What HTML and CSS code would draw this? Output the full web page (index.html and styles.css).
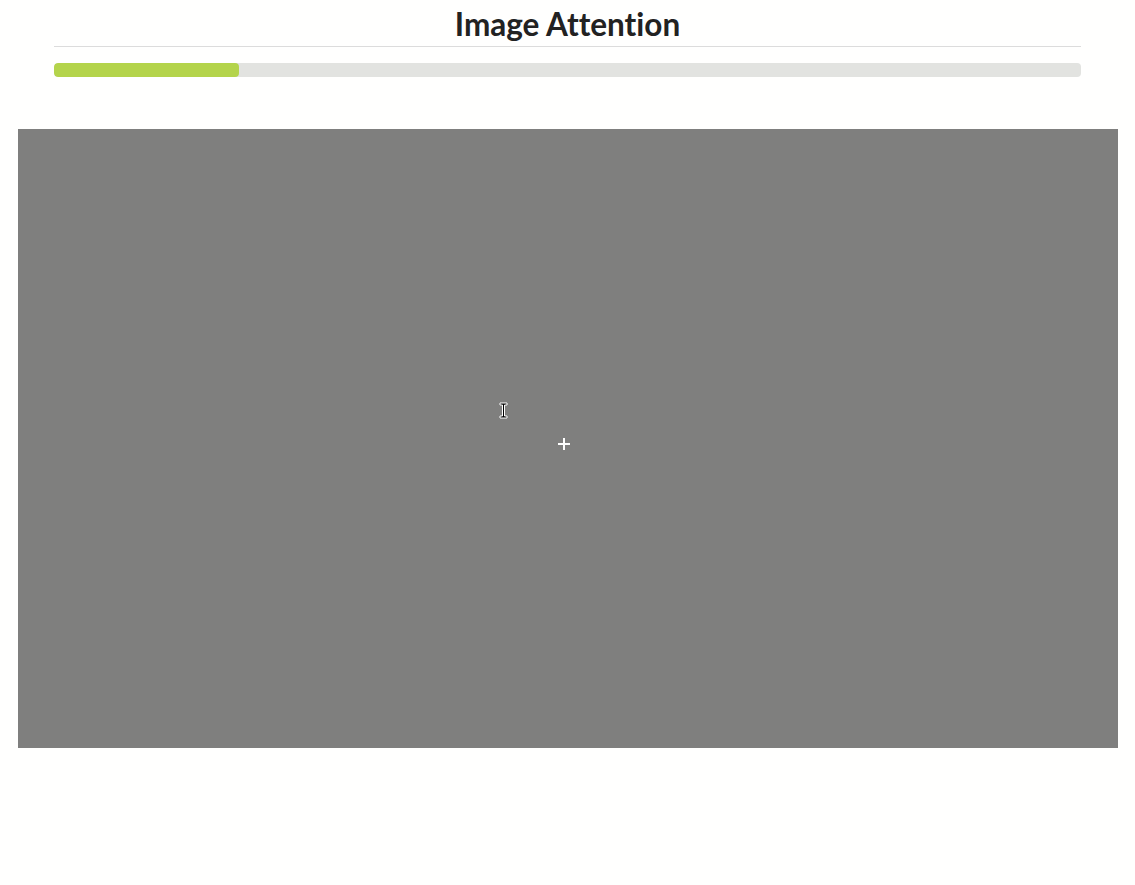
FILE: index.html
```html
<!DOCTYPE html>
<html lang="en">
<head>
<meta charset="utf-8">
<title>Image Attention</title>
<link rel="stylesheet" href="styles.css">
</head>
<body>
  <div class="header">
    <h1 class="title">Image Attention</h1>
    <div class="progress"><div class="progress-fill" style="width:18%"></div></div>
  </div>
  <div class="stage">
    <span class="fixation"></span>
    <svg class="cursor" width="9" height="17" viewBox="0 0 9 17" aria-hidden="true">
      <path d="M1 1h7v2H5.5v11H8v2H1v-2h2.5V3H1z" fill="#000" stroke="#fff" stroke-width="1"/>
    </svg>
  </div>
</body>
</html>
```
FILE: styles.css
```css
html, body {
  margin: 0;
  padding: 0;
  background: #fffffe;
}
body {
  font-family: Lato, "Noto Sans", sans-serif;
  color: #222;
}
.header {
  width: 1027px;
  margin: 0 auto;
  padding-top: 1px;
}
.title {
  margin: 0;
  padding-top: 5px;
  height: 40px;
  line-height: 36px;
  font-size: 31.5px;
  font-weight: 700;
  text-align: center;
  font-variant-ligatures: none;
  border-bottom: 1px solid #dcdcdc;
  color: #222222;
}
.progress {
  margin-top: 16px;
  height: 14px;
  background: #e2e3e0;
  border-radius: 4px;
  overflow: hidden;
}
.progress-fill {
  height: 100%;
  background: #b4d44b;
  border-radius: 4px;
}
.stage {
  position: relative;
  width: 1100px;
  height: 619px;
  margin: 52px auto 0;
  background: #7f7f7e;
}
.fixation {
  position: absolute;
  left: 540px;
  top: 309px;
  width: 12px;
  height: 12px;
}
.fixation::before,
.fixation::after {
  content: "";
  position: absolute;
  background: #fff;
}
.fixation::before {
  left: 0;
  top: 5px;
  width: 12px;
  height: 2px;
}
.fixation::after {
  left: 5px;
  top: 0;
  width: 2px;
  height: 12px;
}
.cursor {
  position: absolute;
  left: 481px;
  top: 273px;
}
```
